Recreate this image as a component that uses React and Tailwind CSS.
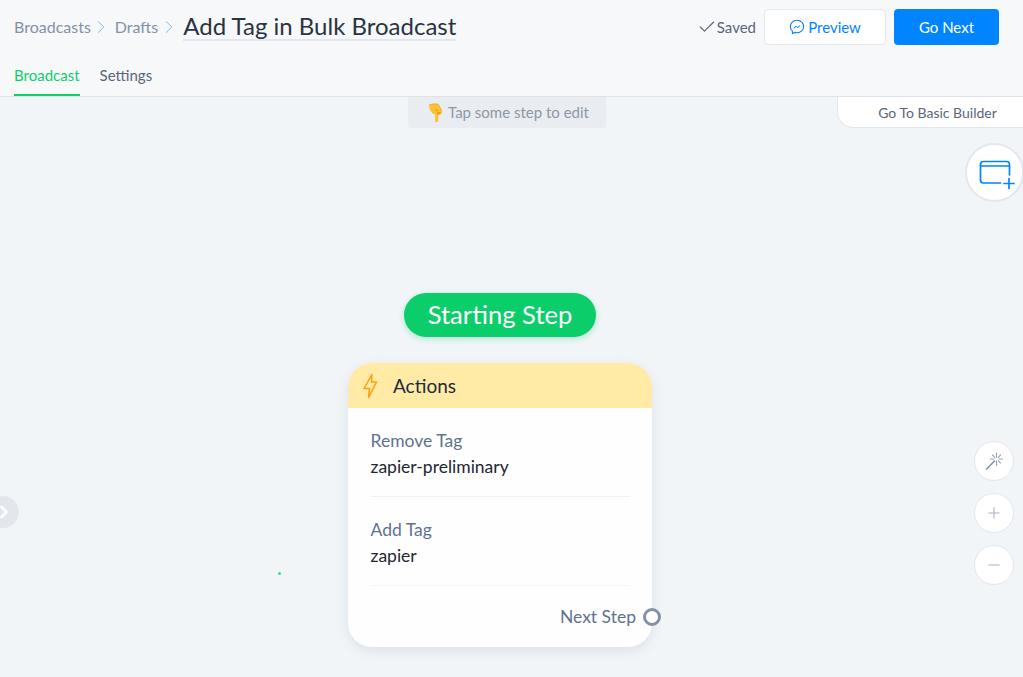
import React from "react";
import { Check, ChevronRight, Minus, Plus } from "lucide-react";

const Crumb = ({ children }) => (
  <>
    <span className="text-[16px] text-[#8492a6]">{children}</span>
    <ChevronRight size={22} strokeWidth={1} className="-mx-[0.5px] text-[#6db3f5]" />
  </>
);

const MessengerIcon = () => (
  <svg width="16" height="16" viewBox="0 0 16 16" fill="none" stroke="#0084ff" strokeWidth="1.1" strokeLinejoin="round">
    <path d="M8 1.2C4.2 1.2 1.3 4 1.3 7.6c0 1.9.8 3.5 2.1 4.6v2.4l2.2-1.2c.7.2 1.5.3 2.4.3 3.8 0 6.7-2.8 6.7-6.100S11.800 1.200 8 1.200z" />
    <path d="M4.800 9.300l2.200-2.400 1.500 1.300 2.500-1.800-2.100 2.400-1.600-1.200z" fill="#0084ff" strokeWidth="0.5" />
  </svg>
);

const BuilderIcon = () => (
  <svg width="40" height="34" viewBox="0 0 40 34" fill="none" stroke="#0084ff" strokeWidth="1.7" strokeLinecap="round">
    <path d="M25.500 27H8.500a3 3 0 0 1-3-3V8.500a3 3 0 0 1 3-3h23a3 3 0 0 1 3 3V19" />
    <path d="M5.500 10h29" />
    <path d="M34 22.500v10M29 27.500h10" />
  </svg>
);

const HandIcon = () => (
  <svg width="15" height="20" viewBox="0 0 15 20">
    <path
      d="M1 1h9l3.800 6.500c.6 1.100.4 2.500-.4 3.400-.7.7-1.700 1-2.800 1h-.4v6c0 1.600-3 1.600-3 0v-6.300C3.500 10.500.5 6 1 1z"
      fill="#fcc033"
    />
    <path d="M3.500 1h6.500l3.800 6.500" fill="none" stroke="#ed9f16" strokeWidth="0.7" />
    <path d="M7 6.500l3 1.500M9.500 9.800l3-.3M10.200 12v-2" fill="none" stroke="#d98a0b" strokeWidth="0.8" />
  </svg>
);

const WandIcon = () => (
  <svg width="20" height="20" viewBox="0 0 20 20" fill="none" stroke="#97a3b5" strokeWidth="1.1" strokeLinecap="round">
    <path d="M2.500 18 10.500 10" strokeWidth="1.500" stroke="#7d8a9e" />
    <path d="M12.500 2v4.500M12.500 10v4.500M6.500 8h3.500M15 8h3.500M8.500 4l2.300 2.300M14.300 9.800l2.200 2.200M16.500 4l-2.200 2.300" />
  </svg>
);

const BoltIcon = () => (
  <svg width="16" height="26" viewBox="0 0 16 26" fill="none" stroke="#ff9f0a" strokeWidth="1.500" strokeLinejoin="round">
    <path d="M10 1.500 2 15.500h5.500L6.500 24.500 14.500 9H9.500z" />
  </svg>
);

const RoundTool = ({ children }) => (
  <button className="flex h-[40px] w-[40px] items-center justify-center rounded-full border border-[#e3e7ee] bg-white text-[#a9b4c4]">
    {children}
  </button>
);

const ActionRow = ({ label, value, border }) => (
  <div className={`border-b pb-[16px] pt-[20px] ${border}`}>
    <div className="text-[17.5px] leading-[26px] text-[#5f7290]">{label}</div>
    <div className="text-[17.5px] leading-[26px] text-[#1f2733]">{value}</div>
  </div>
);

export default function App() {
  return (
    <div className="flex h-[677px] w-full flex-col overflow-hidden bg-[#f1f5f8] font-['Lato',sans-serif]">
      <header className="h-[97px] shrink-0 border-b border-[#dfe3e9] bg-[#f6f8fa] px-[14px]">
        <div className="flex h-[54px] items-center">
          <Crumb>Broadcasts</Crumb>
          <span className="w-[3px]" />
          <Crumb>Drafts</Crumb>
          <h1 className="mb-[1px] ml-[4px] border-b-2 border-[#e3e6ee] text-[24px] leading-[26px] text-[#2a3342]">
            Add Tag in Bulk Broadcast
          </h1>
          <div className="ml-auto flex items-center">
            <Check size={20} strokeWidth={1.4} className="-mr-[1px] text-[#5a6679]" />
            <span className="ml-[1px] text-[15px] text-[#5a6679]">Saved</span>
            <button className="ml-[8px] flex h-[36px] w-[122px] items-center justify-center gap-[3px] rounded-[4px] border border-[#e3e7ee] bg-white text-[15px] text-[#0084ff]">
              <MessengerIcon />
              Preview
            </button>
            <button className="ml-[8px] mr-[10px] h-[36px] w-[105px] rounded-[4px] bg-[#0084ff] text-[15px] text-white">
              Go Next
            </button>
          </div>
        </div>
        <nav className="flex gap-[20px] text-[15px]">
          <a className="h-[42px] border-b-2 border-[#10ce6c] pt-[11px] leading-[20px] text-[#10ce6c]">Broadcast</a>
          <a className="pt-[11px] leading-[20px] text-[#5a6679]">Settings</a>
        </nav>
      </header>

      <main className="relative flex-1">
        <div className="absolute left-[408px] top-0 flex h-[31px] w-[198px] items-center gap-[5px] rounded-b-[4px] bg-[#e9ecf1] pl-[20px] text-[15px] text-[#8e98a6]">
          <HandIcon />
          Tap some step to edit
        </div>

        <button className="absolute right-0 top-0 h-[31px] w-[186px] rounded-bl-[16px] border-b border-l border-[#e3e7ee] bg-white pl-[14px] text-[14px] text-[#5a6679]">
          Go To Basic Builder
        </button>

        <button className="absolute left-[965px] top-[46px] flex h-[59px] w-[59px] items-center justify-center rounded-full border-2 border-[#e3e7ee] bg-white">
          <BuilderIcon />
        </button>

        <div className="absolute left-[974px] top-[344px] flex flex-col gap-[12px]">
          <RoundTool>
            <WandIcon />
          </RoundTool>
          <RoundTool>
            <Plus size={18} strokeWidth={1.4} />
          </RoundTool>
          <RoundTool>
            <Minus size={18} strokeWidth={1.4} />
          </RoundTool>
        </div>

        <button className="absolute -left-[13px] top-[399px] flex h-[32px] w-[32px] items-center justify-end rounded-full bg-[#e3e6ec] pr-[5.500px] text-white">
          <ChevronRight size={20} strokeWidth={3} />
        </button>

        <span className="absolute left-[278px] top-[475px] h-[3px] w-[3px] rounded-full bg-[#10ce6c]/80" />

        <div className="absolute left-[404px] top-[196px] flex h-[44px] w-[192px] items-center justify-center rounded-full bg-[#0bcd6a] pb-[2px] text-[25.600px] text-white shadow-[0_2px_6px_rgba(15,206,107,0.3)]">
          Starting Step
        </div>

        <section className="absolute left-[348px] top-[266px] h-[284px] w-[304px] rounded-[24px] bg-[#fefefe] shadow-[0_4px_12px_rgba(70,90,120,0.12)]">
          <div className="flex h-[45px] items-center rounded-t-[24px] bg-[#ffeaa6] pl-[14px]">
            <BoltIcon />
            <span className="ml-[15px] pt-[2px] text-[19px] text-[#222b3a]">Actions</span>
          </div>
          <div className="pl-[22.500px] pr-[22px]">
            <ActionRow label="Remove Tag" value="zapier-preliminary" border="border-[#eff1f6]" />
            <ActionRow label="Add Tag" value="zapier" border="border-[#f5f6f9]" />
          </div>
          <div className="absolute bottom-[17px] right-[-9px] flex items-center gap-[7px]">
            <span className="text-[17.500px] text-[#5f7290]">Next Step</span>
            <span className="h-[18px] w-[18px] rounded-full border-[3px] border-[#8492a6] bg-white" />
          </div>
        </section>
      </main>
    </div>
  );
}
